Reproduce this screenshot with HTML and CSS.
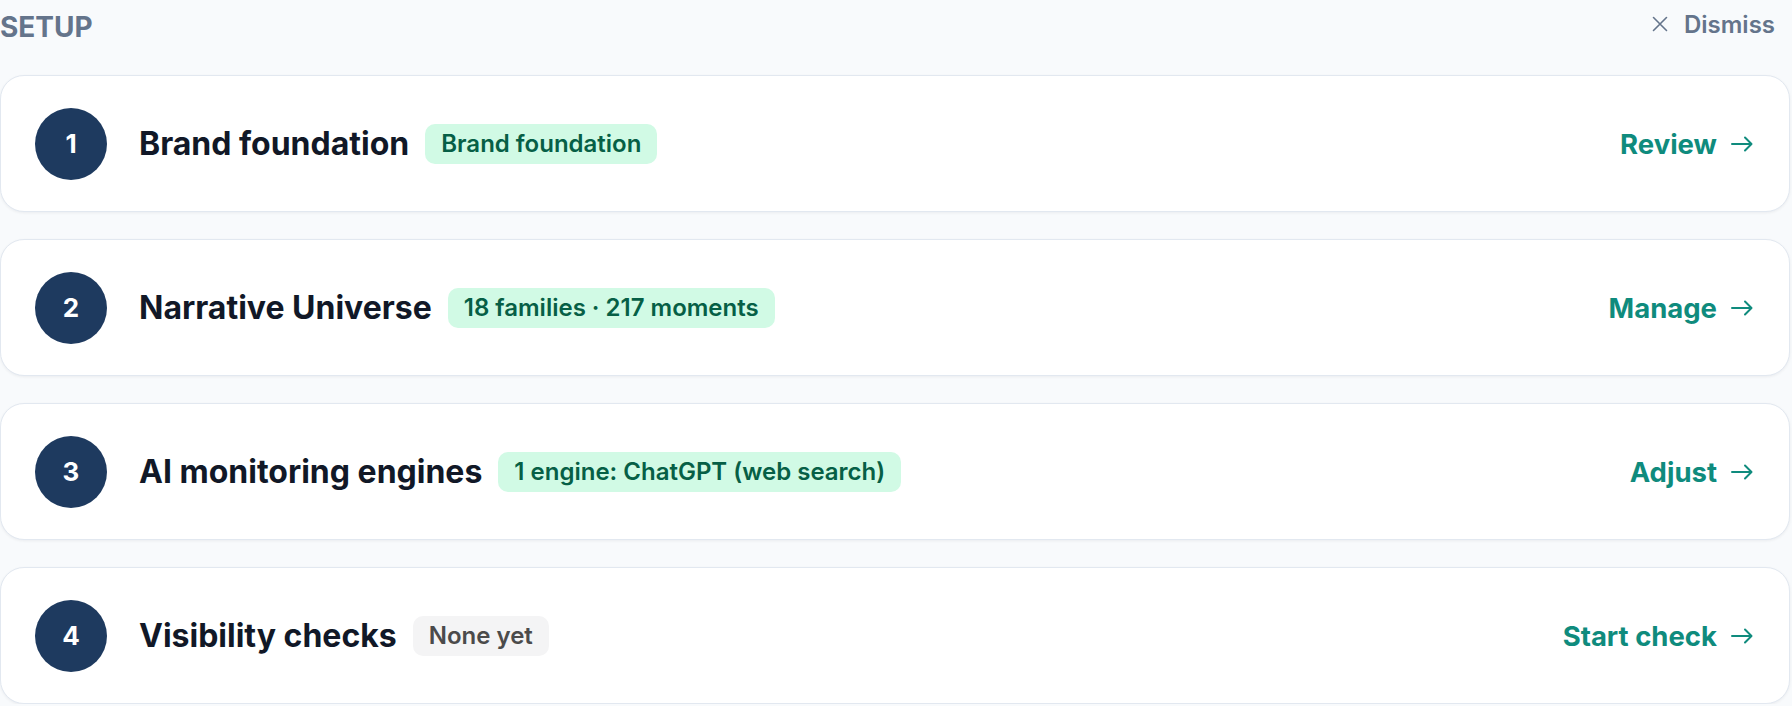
FILE: index.html
```html
<!DOCTYPE html>
<html lang="en">
<head>
  <meta charset="UTF-8">
  <meta name="viewport" content="width=device-width, initial-scale=1.0">
  <title>Setup</title>
  <link rel="stylesheet" href="styles.css">
</head>
<body>
  <div class="setup">
    <div class="setup-head">
      <span class="setup-label">SETUP</span>
      <button class="dismiss" type="button">
        <svg width="16" height="16" viewBox="0 0 16 16" fill="none" stroke="currentColor" stroke-width="1.6" stroke-linecap="round"><path d="M1.5 1.5l13 13M14.5 1.5l-13 13"/></svg>
        Dismiss
      </button>
    </div>

    <div class="steps">
      <div class="step">
        <div class="step-num">1</div>
        <div class="step-title">Brand foundation</div>
        <span class="badge">Brand foundation</span>
        <a class="step-link" href="#">Review
          <svg width="22" height="16" viewBox="0 0 22 16" fill="none" stroke="currentColor" stroke-width="2" stroke-linecap="round" stroke-linejoin="round"><path d="M1 8h19M14 1.5l6.5 6.5-6.5 6.5"/></svg>
        </a>
      </div>

      <div class="step">
        <div class="step-num">2</div>
        <div class="step-title">Narrative Universe</div>
        <span class="badge">18 families · 217 moments</span>
        <a class="step-link" href="#">Manage
          <svg width="22" height="16" viewBox="0 0 22 16" fill="none" stroke="currentColor" stroke-width="2" stroke-linecap="round" stroke-linejoin="round"><path d="M1 8h19M14 1.5l6.5 6.5-6.5 6.5"/></svg>
        </a>
      </div>

      <div class="step">
        <div class="step-num">3</div>
        <div class="step-title">AI monitoring engines</div>
        <span class="badge">1 engine: ChatGPT (web search)</span>
        <a class="step-link" href="#">Adjust
          <svg width="22" height="16" viewBox="0 0 22 16" fill="none" stroke="currentColor" stroke-width="2" stroke-linecap="round" stroke-linejoin="round"><path d="M1 8h19M14 1.5l6.5 6.5-6.5 6.5"/></svg>
        </a>
      </div>

      <div class="step">
        <div class="step-num">4</div>
        <div class="step-title">Visibility checks</div>
        <span class="badge badge-empty">None yet</span>
        <a class="step-link" href="#">Start check
          <svg width="22" height="16" viewBox="0 0 22 16" fill="none" stroke="currentColor" stroke-width="2" stroke-linecap="round" stroke-linejoin="round"><path d="M1 8h19M14 1.5l6.5 6.5-6.5 6.5"/></svg>
        </a>
      </div>
    </div>
  </div>
</body>
</html>
```

FILE: styles.css
```css
* {
  margin: 0;
  padding: 0;
  box-sizing: border-box;
}

body {
  background: #f8fafc;
  font-family: "Inter", "Noto Sans", sans-serif;
  color: #111827;
  overflow: hidden;
}

.setup {
  padding: 6px 2px 0 0;
}

.setup-head {
  display: flex;
  align-items: center;
  justify-content: space-between;
  height: 42px;
  margin-bottom: 27px;
}

.setup-label {
  font-size: 28px;
  font-weight: 700;
  color: #64748b;
  line-height: 42px;
}

.dismiss {
  display: flex;
  align-items: center;
  gap: 16px;
  border: none;
  background: none;
  font-family: inherit;
  font-size: 24px;
  font-weight: 600;
  color: #64748b;
  padding-right: 15px;
  margin-top: -6px;
  cursor: pointer;
}

.steps {
  display: flex;
  flex-direction: column;
  gap: 27px;
}

.step {
  display: flex;
  align-items: center;
  height: 137px;
  padding: 0 36px 0 34px;
  background: #fff;
  border: 1px solid #e2e8f0;
  border-radius: 24px;
  box-shadow: 0 1px 3px rgba(15, 23, 42, .06);
}

.step-num {
  width: 72px;
  height: 72px;
  flex-shrink: 0;
  border-radius: 50%;
  background: #1e3a5f;
  color: #fff;
  display: flex;
  align-items: center;
  justify-content: center;
  font-size: 26px;
  font-weight: 700;
}

.step-title {
  margin-left: 32px;
  font-size: 32px;
  font-weight: 700;
  color: #111827;
}

.badge {
  margin-left: 16px;
  padding: 4px 16px;
  border-radius: 10px;
  background: #d1fae5;
  color: #065f46;
  font-size: 24px;
  font-weight: 600;
  line-height: 32px;
}

.badge-empty {
  background: #f4f4f5;
  color: #4b4b4b;
}

.step-link {
  margin-left: auto;
  display: flex;
  align-items: center;
  gap: 14px;
  color: #0f8b7d;
  font-size: 27.5px;
  font-weight: 700;
  text-decoration: none;
}
```
